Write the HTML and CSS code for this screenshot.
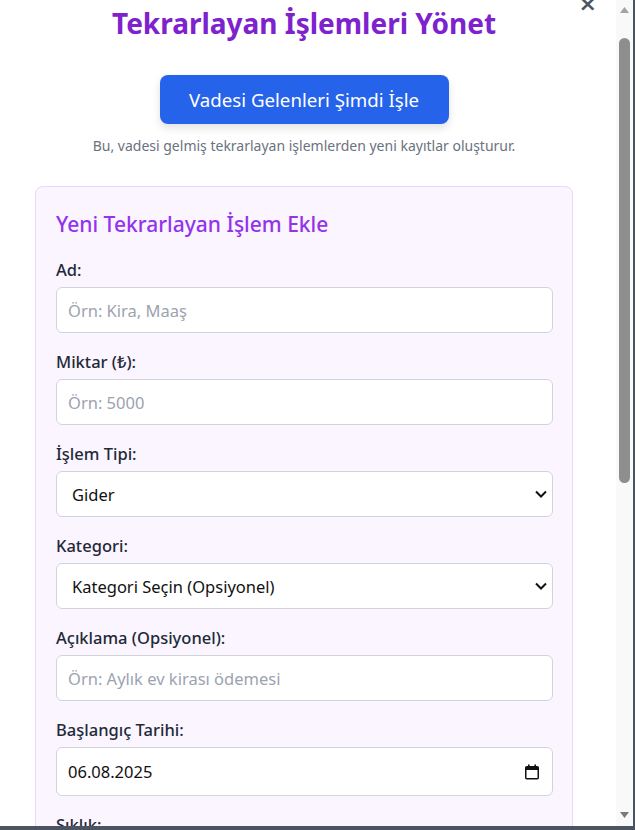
FILE: index.html
```html
<!DOCTYPE html>
<html lang="tr">
<head>
<meta charset="utf-8">
<title>Tekrarlayan İşlemleri Yönet</title>
<link rel="stylesheet" href="styles.css">
</head>
<body>
<div class="modal">
  <div class="content">
    <button class="close" type="button" aria-label="Kapat">×</button>
    <h1 class="title">Tekrarlayan İşlemleri Yönet</h1>
    <div class="process">
      <button class="btn-primary" type="button">Vadesi Gelenleri Şimdi İşle</button>
      <p class="hint">Bu, vadesi gelmiş tekrarlayan işlemlerden yeni kayıtlar oluşturur.</p>
    </div>
    <form class="card">
      <h2 class="card-title">Yeni Tekrarlayan İşlem Ekle</h2>
      <div class="field">
        <label class="label">Ad:</label>
        <input class="input" type="text" placeholder="Örn: Kira, Maaş">
      </div>
      <div class="field">
        <label class="label">Miktar (₺):</label>
        <input class="input" type="text" placeholder="Örn: 5000">
      </div>
      <div class="field">
        <label class="label">İşlem Tipi:</label>
        <div class="select">Gider</div>
      </div>
      <div class="field">
        <label class="label">Kategori:</label>
        <div class="select">Kategori Seçin (Opsiyonel)</div>
      </div>
      <div class="field">
        <label class="label">Açıklama (Opsiyonel):</label>
        <input class="input" type="text" placeholder="Örn: Aylık ev kirası ödemesi">
      </div>
      <div class="field">
        <label class="label">Başlangıç Tarihi:</label>
        <div class="input date">
          <span>06.08.2025</span>
          <svg class="cal" width="16" height="16" viewBox="0 0 16 16" aria-hidden="true">
            <rect x="1.75" y="2.75" width="12.5" height="12" rx="1" fill="none" stroke="#111" stroke-width="1.5"/>
            <rect x="1.5" y="3" width="13" height="3" fill="#111"/>
            <rect x="4" y="0.5" width="1.6" height="3" fill="#111"/>
            <rect x="10.4" y="0.5" width="1.6" height="3" fill="#111"/>
          </svg>
        </div>
      </div>
      <div class="field">
        <label class="label">Sıklık:</label>
        <div class="select">Aylık</div>
      </div>
    </form>
  </div>
  <div class="scrollbar" aria-hidden="true">
    <svg class="arrow" width="9" height="6" viewBox="0 0 9 6"><polygon points="4.5,0 9,6 0,6" fill="#a3a3a3"/></svg>
    <div class="track"><div class="thumb"></div></div>
    <svg class="arrow" width="9" height="6" viewBox="0 0 9 6"><polygon points="0,0 9,0 4.5,6" fill="#7a7a7a"/></svg>
  </div>
</div>
</body>
</html>
```

FILE: styles.css
```css
* { box-sizing: border-box; }

html, body {
  margin: 0;
  padding: 0;
}

body {
  width: 635px;
  height: 830px;
  background: #4c5461;
  overflow: hidden;
  font-family: "Noto Sans", "Open Sans", sans-serif;
}

.modal {
  width: 633px;
  height: 826px;
  background: #ffffff;
  display: flex;
  overflow: hidden;
}

.content {
  position: relative;
  flex: 1;
  padding: 5px 43px 0 35px;
  overflow: hidden;
}

.close {
  position: absolute;
  top: -9px;
  right: 19px;
  border: 0;
  background: none;
  padding: 0;
  font-family: "DejaVu Sans", sans-serif;
  font-size: 22px;
  font-weight: 700;
  line-height: 26px;
  color: #4b5563;
}

.title {
  margin: 0;
  text-align: center;
  font-size: 28px;
  line-height: 36px;
  font-weight: 700;
  color: #7e22ce;
}

.process {
  margin-top: 34px;
  display: flex;
  flex-direction: column;
  align-items: center;
}

.btn-primary {
  width: 289px;
  height: 49px;
  border: 0;
  border-radius: 8px;
  background: #2563eb;
  color: #ffffff;
  font-family: inherit;
  font-size: 18.7px;
  box-shadow: 0 4px 8px rgba(0, 0, 0, 0.12);
}

.hint {
  margin: 12px 0 0;
  font-size: 14px;
  line-height: 20px;
  color: #6b7280;
}

.card {
  margin-top: 30px;
  background: #faf5ff;
  border: 1px solid #e9d5ff;
  border-radius: 8px;
  padding: 22px 19px 24px 20px;
}

.card-title {
  margin: 0 0 19px;
  font-size: 21px;
  line-height: 30px;
  font-weight: 500;
  color: #9333ea;
}

.field {
  margin-bottom: 17px;
}

.label {
  display: block;
  margin-bottom: 5px;
  font-size: 16.5px;
  line-height: 24px;
  font-weight: 500;
  color: #1f2937;
}

.input,
.select {
  display: block;
  width: 100%;
  height: 46px;
  background: #ffffff;
  border: 1px solid #d1d5db;
  border-radius: 6px;
  padding: 0 11px;
  font-family: inherit;
  font-size: 16.5px;
  color: #111111;
  outline: none;
}

.input::placeholder {
  color: #9ca3af;
}

.select {
  display: flex;
  align-items: center;
  padding-left: 15px;
  background-image: url("data:image/svg+xml,%3Csvg xmlns='http://www.w3.org/2000/svg' width='12' height='8' viewBox='0 0 12 8'%3E%3Cpolyline points='1,1.5 6,6.5 11,1.5' fill='none' stroke='%23111' stroke-width='2'/%3E%3C/svg%3E");
  background-repeat: no-repeat;
  background-position: right 5px center;
}

.date {
  display: flex;
  align-items: center;
  justify-content: space-between;
  height: 49px;
  padding-right: 12px;
}

.cal {
  display: block;
}

.scrollbar {
  width: 17px;
  height: 100%;
  background: #f9f9f9;
  display: flex;
  flex-direction: column;
  align-items: center;
  padding: 7px 0 8px;
}

.arrow {
  display: block;
  flex: none;
}

.track {
  flex: 1;
  width: 100%;
  padding: 25px 3px 0 3px;
}

.thumb {
  width: 11px;
  height: 445px;
  border-radius: 6px;
  background: #8e8e8e;
}
```
